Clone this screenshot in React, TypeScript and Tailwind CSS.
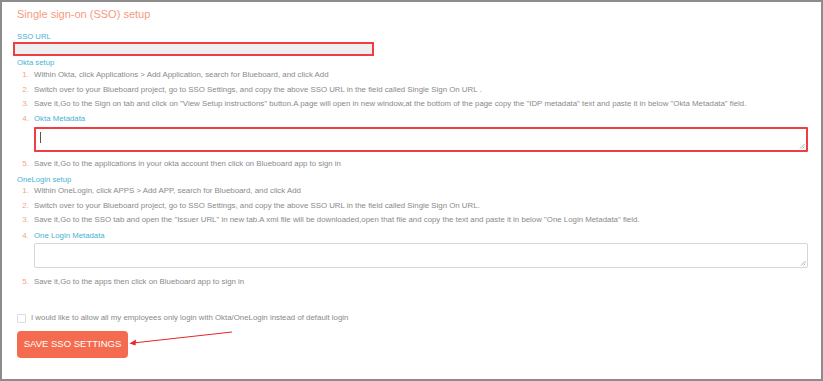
import React from "react";

const Grip = () => (
  <svg className="absolute right-[1px] bottom-[1px]" width="6" height="6" viewBox="0 0 6 6">
    <path d="M5.5 1 L1 5.5 M5.5 3.5 L3.5 5.5" stroke="#9a9a9a" strokeWidth="0.8" />
  </svg>
);

const Item = ({ n, children, label = false }: { n: number; children: React.ReactNode; label?: boolean }) => (
  <div className="flex items-center h-[14.5px]">
    <div className="w-[17px] pr-[5px] text-right text-[8px] text-[#f2a48f]">{n}.</div>
    <div className={label ? "text-[7.8px] text-[#45b3d3]" : "text-[7.85px] text-[#8a8a8a] whitespace-nowrap"}>{children}</div>
  </div>
);

export default function App() {
  return (
    <div
      className="relative w-[823px] h-[381px] bg-white border-2 border-[#8c8c8c] overflow-hidden"
      style={{ fontFamily: '"Liberation Sans", Arial, sans-serif' }}
    >
      <div className="pl-[15px] pt-[4px]">
        <div className="text-[11px] leading-[16px] text-[#f69a80]">Single sign-on (SSO) setup</div>
        <div className="mt-[10px] text-[7.7px] leading-[10px] text-[#45b3d3]">SSO URL</div>
        <div className="ml-[-4px] w-[361px] h-[14px] bg-[#efefef] border-2 border-[#ee3e44]" />
        <div className="mt-[2px] text-[7.7px] leading-[10px] text-[#45b3d3]">Okta setup</div>
        <Item n={1}>Within Okta, click Applications &gt; Add Application, search for Blueboard, and click Add</Item>
        <Item n={2}>Switch over to your Blueboard project, go to SSO Settings, and copy the above SSO URL in the field called Single Sign On URL .</Item>
        <Item n={3}>Save it,Go to the Sign on tab and click on "View Setup instructions" button.A page will open in new window,at the bottom of the page copy the "IDP metadata" text and paste it in below "Okta Metadata" field.</Item>
        <Item n={4} label>Okta Metadata</Item>
        <div className="relative ml-[17px] mt-[1px] w-[774px] h-[25px] border-2 border-[#ee3e44] bg-white rounded-[1px]">
          <div className="absolute left-[4px] top-[3px] w-[1px] h-[11px] bg-[#555]" />
          <Grip />
        </div>
        <div className="mt-[5px]">
          <Item n={5}>Save it,Go to the applications in your okta account then click on Blueboard app to sign in</Item>
        </div>
        <div className="mt-[3.5px] text-[7.7px] leading-[10px] text-[#45b3d3]">OneLogin setup</div>
        <div className="mt-[-1px]">
          <Item n={1}>Within OneLogin, click APPS &gt; Add APP, search for Blueboard, and click Add</Item>
          <Item n={2}>Switch over to your Blueboard project, go to SSO Settings, and copy the above SSO URL in the field called Single Sign On URL.</Item>
          <Item n={3}>Save it,Go to the SSO tab and open the "Issuer URL" in new tab.A xml file will be downloaded,open that file and copy the text and paste it in below "One Login Metadata" field.</Item>
          <div className="mt-[1px]">
            <Item n={4} label>One Login Metadata</Item>
          </div>
        </div>
        <div className="relative ml-[17px] mt-[0px] w-[774px] h-[25px] border border-[#d6d6d6] bg-white rounded-[2px]">
          <Grip />
        </div>
        <div className="mt-[7px]">
          <Item n={5}>Save it,Go to the apps then click on Blueboard app to sign in</Item>
        </div>
        <div className="mt-[21.5px] flex items-center h-[14px]">
          <div className="w-[9px] h-[9px] border border-[#dcdcdc] rounded-[1px] bg-white" />
          <div className="ml-[5px] text-[7.85px] text-[#8a8a8a] whitespace-nowrap">
            I would like to allow all my employees only login with Okta/OneLogin instead of default login
          </div>
        </div>
        <div className="mt-[6px] w-[111px] h-[27px] rounded-[4px] bg-[#f56b50] flex items-center justify-center text-white text-[9.5px]">
          SAVE SSO SETTINGS
        </div>
      </div>
      <svg className="absolute left-0 top-0 pointer-events-none" width="823" height="381" style={{ left: -2, top: -2 }}>
        <line x1="232" y1="332" x2="133" y2="343" stroke="#e8262b" strokeWidth="1" />
        <path d="M129.5 343.4 L136 339.6 L135.5 345.5 Z" fill="#e8262b" />
      </svg>
    </div>
  );
}
